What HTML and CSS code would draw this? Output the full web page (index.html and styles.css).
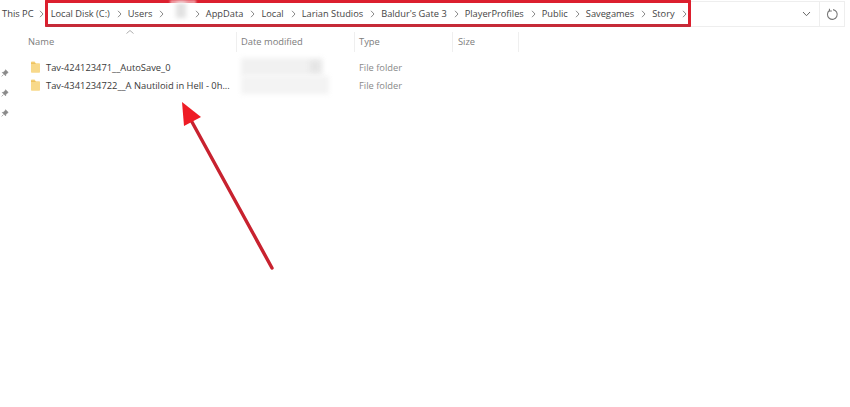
FILE: index.html
```html
<!DOCTYPE html>
<html lang="en">
<head>
<meta charset="utf-8">
<title>Story</title>
<link rel="stylesheet" href="styles.css">
</head>
<body>
<svg class="defs" width="0" height="0" aria-hidden="true">
  <symbol id="chev" viewBox="0 0 5 8"><path d="M1 .8 4 4 1 7.200" fill="none" stroke="#8a8a8a" stroke-width="1"/></symbol>
  <symbol id="folder" viewBox="0 0 9 12"><path d="M0 1.500C0 .8.400.5 1 .5h2.600l1.200 1.700H8c.6 0 1 .4 1 1V11c0 .4-.3.7-.7.7H.7C.3 11.700 0 11.400 0 11z" fill="#f8d98a"/><path d="M0 1.500h3.500L5 3H0z" fill="#eec25f"/></symbol>
  <symbol id="pin" viewBox="0 0 8 8"><path d="M4.500.8 7.200 3.400 6.300 3.900 4.800 5.600 4.600 6.800 1.300 3.500 2.500 3.300 4.100 1.700zM2.500 5.600.6 7.400" fill="#8a8a8a" stroke="#8a8a8a" stroke-width=".7"/></symbol>
</svg>
<div class="window">
  <header class="bar">
    <span class="crumb">This PC</span>
    <svg class="chev"><use href="#chev"/></svg>
    <nav class="path">
      <span class="crumb">Local Disk (C:)</span><svg class="chev"><use href="#chev"/></svg>
      <span class="crumb">Users</span><svg class="chev"><use href="#chev"/></svg>
      <span class="crumb smudge"></span><svg class="chev"><use href="#chev"/></svg>
      <span class="crumb">AppData</span><svg class="chev"><use href="#chev"/></svg>
      <span class="crumb">Local</span><svg class="chev"><use href="#chev"/></svg>
      <span class="crumb">Larian Studios</span><svg class="chev"><use href="#chev"/></svg>
      <span class="crumb">Baldur's Gate 3</span><svg class="chev"><use href="#chev"/></svg>
      <span class="crumb">PlayerProfiles</span><svg class="chev"><use href="#chev"/></svg>
      <span class="crumb">Public</span><svg class="chev"><use href="#chev"/></svg>
      <span class="crumb">Savegames</span><svg class="chev"><use href="#chev"/></svg>
      <span class="crumb">Story</span><svg class="chev"><use href="#chev"/></svg>
      <span class="veil"></span>
    </nav>
    <div class="tools">
      <svg class="drop" viewBox="0 0 9 6"><path d="M1 1 4.500 4.700 8 1" fill="none" stroke="#666" stroke-width="1"/></svg>
      <svg class="refresh" viewBox="0 0 12 12"><path d="M3.200 2.300A4.500 4.500 0 1 0 6.500 1.500" fill="none" stroke="#777" stroke-width="1"/><path d="M3.200.6V2.800H5.400" fill="none" stroke="#777" stroke-width="1"/></svg>
    </div>
  </header>
  <main class="content">
    <aside class="pins">
      <svg class="pin"><use href="#pin"/></svg>
      <svg class="pin"><use href="#pin"/></svg>
      <svg class="pin"><use href="#pin"/></svg>
    </aside>
    <section class="list">
      <div class="sort"><svg viewBox="0 0 8 4" class="caret"><path d="M.5 3.500 4 .5 7.500 3.500" fill="none" stroke="#999" stroke-width=".8"/></svg></div>
      <div class="cols">
        <span class="col name">Name</span>
        <span class="col date">Date modified</span>
        <span class="col type">Type</span>
        <span class="col size">Size</span>
      </div>
      <div class="rows">
        <div class="row">
          <span class="cell-name"><svg class="folder"><use href="#folder"/></svg>Tav-424123471__AutoSave_0</span>
          <span class="cell-type">File folder</span>
        </div>
        <div class="row">
          <span class="cell-name"><svg class="folder"><use href="#folder"/></svg>Tav-4341234722__A Nautiloid in Hell - 0h...</span>
          <span class="cell-type">File folder</span>
        </div>
        <div class="blur blur-top"></div>
        <div class="blur blur-bottom"></div>
        <div class="blur blur-patch"></div>
      </div>
    </section>
  </main>
</div>
<svg class="arrow" viewBox="0 0 150 190" aria-hidden="true">
  <path d="M122 178 42 32" stroke="#c8222f" stroke-width="3.400" stroke-linecap="round" fill="none"/>
  <path d="M32 12 51 27 34 36z" fill="#ee1c25"/>
</svg>
</body>
</html>
```
FILE: styles.css
```css
* { box-sizing: border-box; }
html, body { margin: 0; height: 100%; background: #fff; overflow: hidden; }
body { font-family: "Open Sans", "Noto Sans", sans-serif; font-size: 9.35px; color: #444; position: relative; }
.defs { position: absolute; }
.window { display: flex; flex-direction: column; height: 100%; }

.bar { display: flex; align-items: center; height: 27px; padding-left: 2px; padding-right: 5px; }
.bar > .crumb { margin-right: 5px; }
.path { position: relative; display: flex; align-items: center; gap: 5px; width: 646px; height: 27px; margin-left: 1px; padding-left: 3px; border: 3px solid #dc1f2e; border-bottom-color: #c52a38; border-radius: 1px; font-size: 9.27px; }
.crumb { white-space: nowrap; line-height: 14px; }
.smudge { width: 20px; height: 16px; margin: -7px 2px 0 6px; background: #e2e2e2; filter: blur(2px); }
.veil { position: absolute; left: 122px; top: -3px; width: 26px; height: 4px; background: rgba(255, 255, 255, .55); filter: blur(1px); }
.chev { width: 5px; height: 8px; flex: none; margin: 0 1px 0 2px; }
.bar > .chev { margin: 0; }
.tools { display: flex; align-items: center; flex: 1; justify-content: flex-end; height: 26px; border-top: 1px solid #eee; border-bottom: 1px solid #eee; }
.drop { width: 9px; height: 6px; margin-right: 8px; }
.refresh { width: 13px; height: 13px; box-sizing: content-box; padding: 6px 5px 5px 6px; border-left: 1px solid #eee; border-right: 1px solid #eee; }

.content { display: flex; flex: 1; }
.pins { display: flex; flex-direction: column; gap: 12px; width: 28px; padding-top: 42px; padding-left: 1px; }
.pin { width: 8px; height: 8px; }

.list { flex: 1; position: relative; }
.sort { height: 5px; padding-left: 98px; display: flex; }
.caret { width: 8px; height: 4px; margin-top: 3px; }
.cols { display: flex; height: 20px; align-items: center; color: #7d7d7d; }
.col { height: 20px; line-height: 20px; border-right: 1px solid #efefef; }
.name { width: 209px; }
.date { width: 118px; padding-left: 4px; }
.type { width: 98px; padding-left: 4px; }
.size { width: 66px; padding-left: 5px; }

.rows { position: relative; padding-top: 6px; }
.row { display: flex; height: 18px; align-items: center; }
.cell-name { display: flex; align-items: center; gap: 6px; width: 331px; padding-left: 3px; white-space: nowrap; color: #3a3a3a; }
.cell-type { color: #8a8a8a; }
.folder { width: 9px; height: 12px; flex: none; }
.blur { position: absolute; filter: blur(2.500px); }
.blur-top { left: 213px; top: 6px; width: 82px; height: 18px; background: #f1f1f1; }
.blur-bottom { left: 213px; top: 24px; width: 88px; height: 18px; background: #f3f3f3; }
.blur-patch { left: 282px; top: 9px; width: 10px; height: 11px; background: #e4e4e4; }

.arrow { position: absolute; left: 150px; top: 90px; width: 150px; height: 190px; }
```
